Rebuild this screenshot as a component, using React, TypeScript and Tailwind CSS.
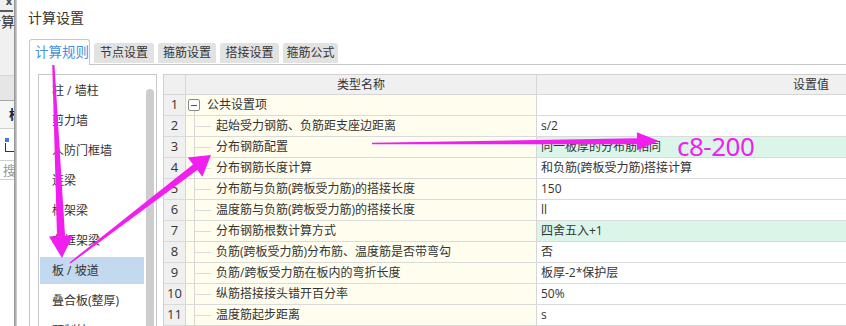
import React from "react";

const PINK = "#f01ff0";

function arrowPoints(
  sx: number,
  sy: number,
  tx: number,
  ty: number,
  w0: number,
  w1: number,
  L: number,
  H: number
): string {
  const dx = tx - sx;
  const dy = ty - sy;
  const len = Math.hypot(dx, dy);
  const ux = dx / len;
  const uy = dy / len;
  const nx = -uy;
  const ny = ux;
  const bx = tx - ux * L;
  const by = ty - uy * L;
  const pts: [number, number][] = [
    [sx + (nx * w0) / 2, sy + (ny * w0) / 2],
    [bx + (nx * w1) / 2, by + (ny * w1) / 2],
    [bx + nx * H, by + ny * H],
    [tx, ty],
    [bx - nx * H, by - ny * H],
    [bx - (nx * w1) / 2, by - (ny * w1) / 2],
    [sx - (nx * w0) / 2, sy - (ny * w0) / 2],
  ];
  return pts.map((p) => `${p[0].toFixed(1)},${p[1].toFixed(1)}`).join(" ");
}

type Row = { n: number; name: string; value: string; group?: boolean; green?: boolean };

const rows: Row[] = [
  { n: 1, name: "公共设置项", value: "", group: true },
  { n: 2, name: "起始受力钢筋、负筋距支座边距离", value: "s/2" },
  { n: 3, name: "分布钢筋配置", value: "同一板厚的分布筋相同", green: true },
  { n: 4, name: "分布钢筋长度计算", value: "和负筋(跨板受力筋)搭接计算" },
  { n: 5, name: "分布筋与负筋(跨板受力筋)的搭接长度", value: "150" },
  { n: 6, name: "温度筋与负筋(跨板受力筋)的搭接长度", value: "ll" },
  { n: 7, name: "分布钢筋根数计算方式", value: "四舍五入+1", green: true },
  { n: 8, name: "负筋(跨板受力筋)分布筋、温度筋是否带弯勾", value: "否" },
  { n: 9, name: "负筋/跨板受力筋在板内的弯折长度", value: "板厚-2*保护层" },
  { n: 10, name: "纵筋搭接接头错开百分率", value: "50%" },
  { n: 11, name: "温度筋起步距离", value: "s" },
];

const listItems = [
  "柱 / 墙柱",
  "剪力墙",
  "人防门框墙",
  "连梁",
  "框架梁",
  "非框架梁",
  "板 / 坡道",
  "叠合板(整厚)",
  "预制柱",
];

const tabs = [
  { label: "节点设置", w: "w-[60px]" },
  { label: "箍筋设置", w: "w-[58px]" },
  { label: "搭接设置", w: "w-[59px]" },
  { label: "箍筋公式", w: "w-[55px]" },
];

function LeftStrip() {
  return (
    <div className="flex h-full w-[17px] shrink-0">
      <div className="flex w-[14px] flex-col overflow-hidden bg-[#f0f0f0]">
        <div className="flex h-[10px] items-start justify-end overflow-hidden">
          <span className="-mt-[5px] mr-[2px] text-[11px] font-bold leading-none text-[#444]">x</span>
        </div>
        <div className="h-[2px] w-[13px] bg-[#5a5a5a]" />
        <div className="flex h-[20px] items-center overflow-hidden">
          <span className="-ml-[13px] whitespace-nowrap text-[14px] leading-none text-[#333]">计算设</span>
        </div>
        <div className="h-[43px]" />
        <div className="h-[25px] border-t border-[#d6d6d6] bg-[#e6e6e6]" />
        <div className="flex h-[28px] items-center overflow-hidden border-t border-[#a8a8a8] bg-[#f6f6f6]">
          <span className="ml-[9px] whitespace-nowrap text-[13px] font-bold leading-none text-[#222]">标</span>
        </div>
        <div className="flex h-[32px] flex-col justify-center border-t border-[#d0d0d0] bg-white pl-[5px]">
          <div className="flex items-start">
            <div className="h-[4px] w-[4px] bg-[#3b7de0]" />
          </div>
          <div className="mt-[1px] h-[9px] w-[9px] border-b border-l border-[#333]" />
        </div>
        <div className="flex h-[20px] items-center border-y border-[#d0d0d0] bg-white">
          <span className="ml-[3px] text-[13px] leading-none text-[#9a9a9a]">搜</span>
        </div>
        <div className="flex-1 bg-white" />
      </div>
      <div className="h-full w-[3px] bg-gradient-to-r from-[#8c8c8c] to-[#d8d8d8]" />
    </div>
  );
}

function Grid() {
  return (
    <div className="flex min-w-0 flex-1 flex-col border-l border-t border-[#d0d0d0] text-[12px] text-[#333]">
      <div className="flex h-[20px] shrink-0 border-b border-[#d6d6d6] bg-[#f0f0f0]">
        <div className="w-[22px] border-r border-[#d6d6d6]" />
        <div className="flex w-[351px] items-center justify-center border-r border-[#d6d6d6]">类型名称</div>
        <div className="flex flex-1 items-center justify-end pr-[17px]">设置值</div>
      </div>
      {rows.map((r) => (
        <div key={r.n} className="flex h-[21px] shrink-0 border-b border-[#dadada]">
          <div className="flex w-[22px] items-center justify-center border-r border-[#d6d6d6] bg-[#f0f0f0] text-[13px]">
            {r.n}
          </div>
          <div className="flex w-[351px] items-stretch border-r border-[#d6d6d6] bg-[#fffdee]">
            {r.group ? (
              <>
                <div className="ml-[2px] flex w-[12px] flex-col items-center">
                  <div className="flex-1" />
                  <div className="flex h-[12px] w-[12px] items-center justify-center rounded-[2px] border border-[#8a8a8a] bg-white">
                    <div className="h-px w-[6px] bg-[#555]" />
                  </div>
                  <div className="w-px flex-1 bg-[#d6d6d6]" />
                </div>
                <span className="ml-[7px] self-center whitespace-nowrap">{r.name}</span>
              </>
            ) : (
              <>
                <div className="w-[8px]" />
                <div className="flex w-[17px] items-center border-l border-[#d6d6d6]">
                  <div className="h-px w-full bg-[#dadada]" />
                </div>
                <span className="ml-[5px] self-center whitespace-nowrap">{r.name}</span>
              </>
            )}
          </div>
          <div
            className={`flex flex-1 items-center whitespace-nowrap pl-[4px] ${
              r.green ? "bg-[#dcf5e9]" : "bg-white"
            }`}
          >
            {r.value}
          </div>
        </div>
      ))}
    </div>
  );
}

function ListPanel() {
  return (
    <div className="flex w-[119px] shrink-0 border-l border-r border-t border-[#c8c8c8] text-[12px] text-[#333]">
      <div className="flex w-[106px] flex-col pt-[2px]">
        {listItems.map((it, i) => (
          <div key={it} className="mb-[3px] flex h-[27px] shrink-0 px-[1px]">
            <div
              className={`flex flex-1 items-center whitespace-nowrap pl-[12px] ${
                i === 6 ? "bg-[#c3d9ef]" : ""
              }`}
            >
              {it}
            </div>
          </div>
        ))}
      </div>
      <div className="ml-[1px] flex w-[8px] flex-col pt-[14px]">
        <div className="flex-1 rounded-t-full bg-[#cdcdcd]" />
      </div>
    </div>
  );
}

export default function App() {
  return (
    <div className="relative flex h-[326px] w-[846px] overflow-hidden bg-white font-['Open_Sans','Noto_Sans_CJK_SC',sans-serif]">
      <LeftStrip />
      <div className="flex min-w-0 flex-1 flex-col">
        <div className="h-[39px] shrink-0 pl-[11px] pt-[9px] text-[14px] leading-[18px] text-[#333]">计算设置</div>
        <div className="relative z-10 ml-[12px] flex h-[25px] shrink-0 items-end">
          <div className="-mb-px flex h-[26px] w-[61px] items-start rounded-t-[3px] border border-b-0 border-[#c6c6c6] bg-white pl-[5px] pt-[4px] text-[13.5px] leading-[16px] text-[#4a90dc]">
            计算规则
          </div>
          {tabs.map((t) => (
            <div
              key={t.label}
              className={`ml-[4px] mb-[1px] flex h-[20px] ${t.w} items-center justify-center rounded-t-[3px] bg-[#e2e2e2] text-[12px] text-[#333]`}
            >
              {t.label}
            </div>
          ))}
        </div>
        <div className="ml-[12px] flex min-h-0 flex-1 border-l border-t border-[#c6c6c6] pl-[8px] pt-[9px]">
          <ListPanel />
          <div className="w-[6px] shrink-0" />
          <Grid />
        </div>
      </div>

      <svg
        className="pointer-events-none absolute left-0 top-0"
        width={846}
        height={326}
        viewBox="0 0 846 326"
      >
        <polygon points={arrowPoints(53, 57, 62, 258, 2, 8, 22, 12)} fill={PINK} />
        <polygon points={arrowPoints(70, 263, 211, 155, 1.5, 7, 20, 12)} fill={PINK} />
        <polygon points={arrowPoints(372, 143.5, 659, 141, 1.5, 6, 22, 9)} fill={PINK} />
      </svg>
      <span className="pointer-events-none absolute left-[677px] top-[133px] font-['Noto_Sans',sans-serif] text-[26px] leading-none tracking-[-0.5px] text-[#f01ff0]">
        c8-200
      </span>
    </div>
  );
}
